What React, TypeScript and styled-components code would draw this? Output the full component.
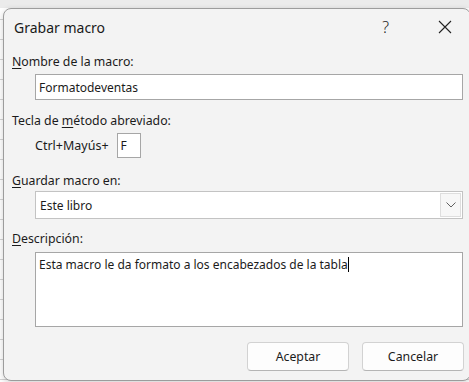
import styled, { createGlobalStyle } from 'styled-components';

const GlobalStyle = createGlobalStyle`
  * {
    box-sizing: border-box;
  }
  body {
    margin: 0;
    background: #ebebeb;
    font-family: 'Noto Sans', 'Segoe UI', sans-serif;
    color: #1b1b1b;
  }
`;

const Under = ({ children }: { children: string }) => <u>{children}</u>;

const App = () => {
  return (
    <>
      <GlobalStyle />
      <Page>
        <Dialog>
          <TitleBar>
            <Title>Grabar macro</Title>
            <TitleButtons>
              <HelpGlyph>?</HelpGlyph>
              <CloseIcon viewBox="0 0 14 14">
                <path d="M1 1 L13 13 M13 1 L1 13" />
              </CloseIcon>
            </TitleButtons>
          </TitleBar>
          <Body>
            <Label>
              <Under>N</Under>ombre de la macro:
            </Label>
            <TextInput $top={3} value="Formatodeventas" readOnly />

            <Label $top={12}>
              Tecla de <Under>m</Under>étodo abreviado:
            </Label>
            <ShortcutRow>
              <span>Ctrl+Mayús+</span>
              <KeyInput value="F" readOnly />
            </ShortcutRow>

            <Label $top={14}>
              <Under>G</Under>uardar macro en:
            </Label>
            <Select>
              <SelectValue>Este libro</SelectValue>
              <SelectArrow>
                <svg width="10" height="6" viewBox="0 0 10 6">
                  <path d="M0.5 0.5 L5 5 L9.5 0.5" fill="none" stroke="#606060" strokeWidth="1" />
                </svg>
              </SelectArrow>
            </Select>

            <Label $top={11}>
              <Under>D</Under>escripción:
            </Label>
            <Description>
              Esta macro le da formato a los encabezados de la tabla
              <Caret />
            </Description>

            <Footer>
              <DialogButton>Aceptar</DialogButton>
              <DialogButton>Cancelar</DialogButton>
            </Footer>
          </Body>
        </Dialog>
      </Page>
    </>
  );
};

export default App;

const Page = styled.div`
  width: 469px;
  height: 382px;
  overflow: hidden;
  padding: 8px 0 0 3px;
  background: linear-gradient(#ebebeb, #ebebeb) top / 100% 8px no-repeat,
    repeating-linear-gradient(#ffffff 0 19px, #d4d4d4 19px 20px);
`;

const Dialog = styled.div`
  width: 468px;
  height: 373px;
  background: #f3f3f3;
  border: 1px solid #9c9c9c;
  border-radius: 8px;
  display: flex;
  flex-direction: column;
  box-shadow: 0 2px 6px rgba(0, 0, 0, 0.18);
`;

const TitleBar = styled.div`
  height: 36px;
  display: flex;
  align-items: center;
  justify-content: space-between;
  padding-left: 10px;
`;

const Title = styled.h1`
  margin: 0;
  font-size: 14px;
  font-weight: 400;
  color: #1a1a1a;
`;

const TitleButtons = styled.div`
  display: flex;
  align-items: center;
  gap: 49px;
  padding-right: 18px;
`;

const HelpGlyph = styled.span`
  font-size: 16px;
  font-weight: 300;
  color: #222;
`;

const CloseIcon = styled.svg`
  width: 14px;
  height: 14px;
  stroke: #222;
  stroke-width: 1.1;
  fill: none;
`;

const Body = styled.div`
  padding: 8px 0 0 8px;
  display: flex;
  flex-direction: column;
`;

const Label = styled.div<{ $top?: number }>`
  margin-top: ${({ $top }) => $top ?? 0}px;
  height: 18px;
  line-height: 18px;
  font-size: 12.3px;
  u {
    text-underline-offset: 2px;
  }
`;

const fieldBox = `
  margin-left: 23px;
  width: 428px;
  background: #ffffff;
  border: 1px solid #a6a6a6;
  font-family: 'Noto Sans', sans-serif;
  font-size: 12px;
  color: #1b1b1b;
`;

const TextInput = styled.input<{ $top?: number }>`
  ${fieldBox}
  margin-top: ${({ $top }) => $top ?? 0}px;
  height: 26px;
  padding: 0 3px;
  outline: none;
`;

const ShortcutRow = styled.div`
  margin: 3px 0 0 23px;
  display: flex;
  align-items: center;
  gap: 8px;
  font-size: 12.5px;
`;

const KeyInput = styled.input`
  width: 24px;
  height: 25px;
  background: #ffffff;
  border: 1px solid #a6a6a6;
  padding: 0 3px;
  font-family: 'Noto Sans', sans-serif;
  font-size: 12px;
  color: #1b1b1b;
  outline: none;
`;

const Select = styled.div`
  ${fieldBox}
  margin-top: 1px;
  height: 28px;
  display: flex;
  align-items: center;
  justify-content: space-between;
  padding: 0 1px 0 4px;
  border-color: #c3c3c3;
`;

const SelectValue = styled.span``;

const SelectArrow = styled.div`
  width: 21px;
  height: 24px;
  background: #f7f7f7;
  border: 1px solid #dedede;
  display: flex;
  align-items: center;
  justify-content: center;
`;

const Description = styled.div`
  ${fieldBox}
  margin-top: 4px;
  height: 75px;
  padding: 3px 3px;
  line-height: 18px;
`;

const Caret = styled.span`
  display: inline-block;
  width: 1px;
  height: 15px;
  background: #000;
  vertical-align: -3px;
`;

const Footer = styled.div`
  margin-top: 15px;
  display: flex;
  justify-content: flex-end;
  gap: 13px;
  padding-right: 6px;
`;

const DialogButton = styled.button`
  width: 102px;
  height: 29px;
  background: #fdfdfd;
  border: 1px solid #d2d2d2;
  border-bottom-color: #b5b5b5;
  border-radius: 4px;
  font-family: 'Noto Sans', sans-serif;
  font-size: 12.3px;
  color: #1b1b1b;
`;
